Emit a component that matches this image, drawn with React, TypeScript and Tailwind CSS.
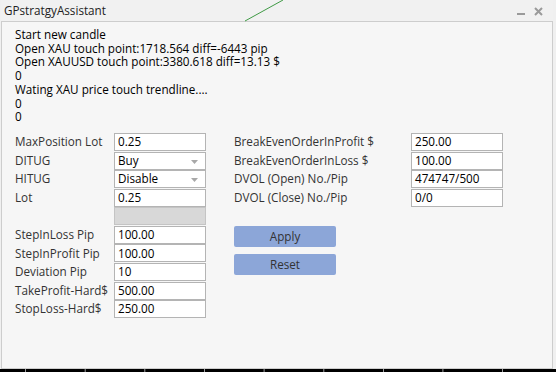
import React from 'react';

const font = { fontFamily: '"Open Sans", "Noto Sans", sans-serif' };

const logLines = [
  'Start new candle',
  'Open XAU touch point:1718.564 diff=-6443 pip',
  'Open XAUUSD touch point:3380.618 diff=13.13 $',
  '0',
  'Wating XAU price touch trendline....',
  '0',
  '0',
];

type Field = { label: string; value?: string; select?: boolean; blank?: boolean };

const leftFields: Field[] = [
  { label: 'MaxPosition Lot', value: '0.25' },
  { label: 'DITUG', value: 'Buy', select: true },
  { label: 'HITUG', value: 'Disable', select: true },
  { label: 'Lot', value: '0.25' },
  { label: '', blank: true },
  { label: 'StepInLoss Pip', value: '100.00' },
  { label: 'StepInProfit Pip', value: '100.00' },
  { label: 'Deviation Pip', value: '10' },
  { label: 'TakeProfit-Hard$', value: '500.00' },
  { label: 'StopLoss-Hard$', value: '250.00' },
];

const rightFields: Field[] = [
  { label: 'BreakEvenOrderInProfit $', value: '250.00' },
  { label: 'BreakEvenOrderInLoss $', value: '100.00' },
  { label: 'DVOL (Open) No./Pip', value: '474747/500' },
  { label: 'DVOL (Close) No./Pip', value: '0/0' },
];

function Row({ f, labelW }: { f: Field; labelW: string }) {
  return (
    <div className="flex items-center h-[18.55px]">
      <div className={`${labelW} text-[#333] whitespace-nowrap`}>{f.label}</div>
      {f.blank ? (
        <div className="w-[92px] h-[18px] bg-[#d8d8d8] border border-[#c4c4c4]" />
      ) : (
        <div className="relative w-[92px] h-[18px] bg-white border border-[#b4b4b4] flex items-center pl-[3px] text-black whitespace-nowrap">
          {f.value}
          {f.select && (
            <svg className="absolute right-[7px] top-[7px]" width="7" height="4" viewBox="0 0 7 4">
              <path d="M0 0 L7 0 L3.5 4 Z" fill="#a8a8a8" />
            </svg>
          )}
        </div>
      )}
    </div>
  );
}

export default function App() {
  const ticks = [25, 84.7, 144.3, 204, 263.6, 323.3, 383, 442.4, 502];
  return (
    <div className="relative w-[556px] h-[372px] overflow-hidden bg-[#f0f0f0] text-[11.7px] leading-[13.7px]" style={font}>
      <div className="flex flex-col h-[369px] pl-[1px] pr-[3px]">
        <div className="h-[21px] flex items-center justify-between pl-[3px] pr-[10px] text-[#222] bg-[#f1f1f1]">
          <span>GPstratgyAssistant</span>
          <div className="flex items-center gap-[9px] pt-[2px]">
            <div className="w-[8px] h-[2px] bg-[#9a9a9a] mt-[5px]" />
            <svg width="9" height="9" viewBox="0 0 9 9">
              <path d="M1 1 L8 8 M8 1 L1 8" stroke="#9a9a9a" strokeWidth="2" />
            </svg>
          </div>
        </div>
        <div className="flex-1 bg-[#f6f6f6] border border-[#cdcdcd] pl-[13px] pt-[6px]">
          <div className="text-black">
            {logLines.map((l, i) => (
              <div key={i} className="whitespace-nowrap">{l}</div>
            ))}
          </div>
          <div className="flex mt-[9px]">
            <div className="flex flex-col">
              {leftFields.map((f, i) => (
                <Row key={i} f={f} labelW="w-[99px]" />
              ))}
            </div>
            <div className="flex flex-col ml-[28px]">
              {rightFields.map((f, i) => (
                <Row key={i} f={f} labelW="w-[177px]" />
              ))}
              <div className="flex flex-col gap-[7px] mt-[19px] w-[102px]">
                <div className="h-[21px] bg-[#8ca6d8] rounded-[2px] flex items-center justify-center text-[#333]">Apply</div>
                <div className="h-[21px] bg-[#8ca6d8] rounded-[2px] flex items-center justify-center text-[#333]">Reset</div>
              </div>
            </div>
          </div>
        </div>
      </div>
      <svg className="absolute left-0 top-[369px]" width="556" height="3">
        <rect width="556" height="3" fill="#000" />
        {ticks.map((x) => (
          <rect key={x} x={x} y={0} width={1} height={3} fill="#9a9a9a" />
        ))}
      </svg>
      <svg className="absolute left-[244px] top-0" width="40" height="22">
        <path d="M1 21 L39 0" stroke="#3f9a45" strokeWidth="1" fill="none" />
      </svg>
    </div>
  );
}
